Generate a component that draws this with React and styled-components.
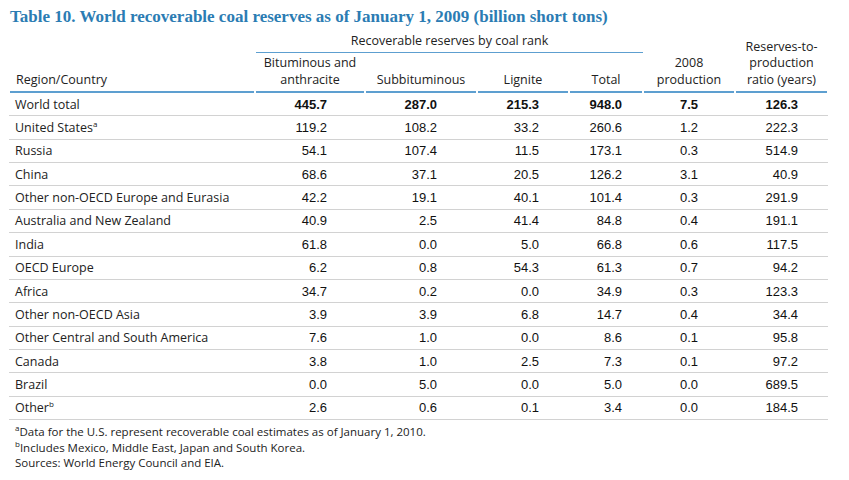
import React from "react";
import styled, { createGlobalStyle } from "styled-components";

const GlobalStyle = createGlobalStyle`
  body {
    margin: 0;
    background: #ffffff;
  }
`;

const COLS = "246px 110px 112px 92px 74px 92px 93px";
const PAD = [0, 38, 40, 30, 21, 37, 30];

const Page = styled.div`
  width: 849px;
  height: 480px;
  padding: 6px 0 0 9px;
  box-sizing: border-box;
  color: #222;
  font-family: "Open Sans", "Liberation Sans", sans-serif;
`;

const Title = styled.h1`
  margin: 0 0 0 1px;
  font-family: "Liberation Serif", serif;
  font-weight: bold;
  font-size: 17px;
  line-height: 22px;
  color: #2b7cb3;
`;

const Table = styled.div`
  width: 819px;
  margin-top: 3px;
`;

const Head = styled.div`
  display: grid;
  grid-template-columns: ${COLS};
  grid-template-rows: 22px 40px;
  font-size: 12.5px;
  line-height: 16.5px;
`;

const HeadCell = styled.div`
  grid-column: ${(p) => p.$col};
  grid-row: ${(p) => p.$row};
  align-self: end;
  text-align: ${(p) => (p.$left ? "left" : "center")};
  padding: 0 0 3px ${(p) => (p.$left ? "6px" : "0")};
  margin: 0 1px;
  border-bottom: 2px solid #5d9fd0;
`;

const GroupCell = styled.div`
  grid-column: 2 / 6;
  grid-row: 1;
  text-align: center;
  border-bottom: 1px solid #5d9fd0;
  padding-bottom: 3px;
  margin: 0 0 0 1px;
  align-self: end;
`;

const Row = styled.div`
  display: grid;
  grid-template-columns: ${COLS};
  height: 23.36px;
  box-sizing: border-box;
  align-items: center;
  border-bottom: 1px solid #d2d2d2;
`;

const Label = styled.div`
  padding-left: 6px;
  font-size: 12.5px;
  white-space: nowrap;
`;

const Num = styled.div`
  text-align: right;
  padding-right: ${(p) => p.$pad}px;
  font-family: "Liberation Sans", Arial, sans-serif;
  font-size: 13px;
  font-weight: ${(p) => (p.$bold ? "bold" : "normal")};
  color: #111;
`;

const Sup = styled.sup`
  font-size: 8px;
  line-height: 0;
  vertical-align: 5px;
`;

const Notes = styled.div`
  padding: 4px 0 0 6px;
  font-size: 11.5px;
  line-height: 15.5px;
`;

const data = [
  ["United States", "a", "119.2", "108.2", "33.2", "260.6", "1.2", "222.3"],
  ["Russia", "", "54.1", "107.4", "11.5", "173.1", "0.3", "514.9"],
  ["China", "", "68.6", "37.1", "20.5", "126.2", "3.1", "40.9"],
  ["Other non-OECD Europe and Eurasia", "", "42.2", "19.1", "40.1", "101.4", "0.3", "291.9"],
  ["Australia and New Zealand", "", "40.9", "2.5", "41.4", "84.8", "0.4", "191.1"],
  ["India", "", "61.8", "0.0", "5.0", "66.8", "0.6", "117.5"],
  ["OECD Europe", "", "6.2", "0.8", "54.3", "61.3", "0.7", "94.2"],
  ["Africa", "", "34.7", "0.2", "0.0", "34.9", "0.3", "123.3"],
  ["Other non-OECD Asia", "", "3.9", "3.9", "6.8", "14.7", "0.4", "34.4"],
  ["Other Central and South America", "", "7.6", "1.0", "0.0", "8.6", "0.1", "95.8"],
  ["Canada", "", "3.8", "1.0", "2.5", "7.3", "0.1", "97.2"],
  ["Brazil", "", "0.0", "5.0", "0.0", "5.0", "0.0", "689.5"],
  ["Other", "b", "2.6", "0.6", "0.1", "3.4", "0.0", "184.5"],
];

const DataRow = ({ label, sup, values, bold }) => (
  <Row>
    <Label>
      {label}
      {sup && <Sup>{sup}</Sup>}
    </Label>
    {values.map((v, i) => (
      <Num key={i} $pad={PAD[i + 1]} $bold={bold}>
        {v}
      </Num>
    ))}
  </Row>
);

export default function App() {
  return (
    <Page>
      <GlobalStyle />
      <Title>
        Table 10. World recoverable coal reserves as of January 1, 2009 (billion short tons)
      </Title>
      <Table>
        <Head>
          <HeadCell $col="1" $row="1 / 3" $left>
            Region/Country
          </HeadCell>
          <GroupCell>Recoverable reserves by coal rank</GroupCell>
          <HeadCell $col="2" $row="2">
            Bituminous and
            <br />
            anthracite
          </HeadCell>
          <HeadCell $col="3" $row="2">Subbituminous</HeadCell>
          <HeadCell $col="4" $row="2">Lignite</HeadCell>
          <HeadCell $col="5" $row="2">Total</HeadCell>
          <HeadCell $col="6" $row="1 / 3">
            2008
            <br />
            production
          </HeadCell>
          <HeadCell $col="7" $row="1 / 3">
            Reserves-to-
            <br />
            production
            <br />
            ratio (years)
          </HeadCell>
        </Head>
        <DataRow
          label="World total"
          values={["445.7", "287.0", "215.3", "948.0", "7.5", "126.3"]}
          bold
        />
        {data.map(([label, sup, ...values]) => (
          <DataRow key={label} label={label} sup={sup} values={values} />
        ))}
      </Table>
      <Notes>
        <div>
          <Sup>a</Sup>Data for the U.S. represent recoverable coal estimates as of January 1, 2010.
        </div>
        <div>
          <Sup>b</Sup>Includes Mexico, Middle East, Japan and South Korea.
        </div>
        <div>Sources: World Energy Council and EIA.</div>
      </Notes>
    </Page>
  );
}
